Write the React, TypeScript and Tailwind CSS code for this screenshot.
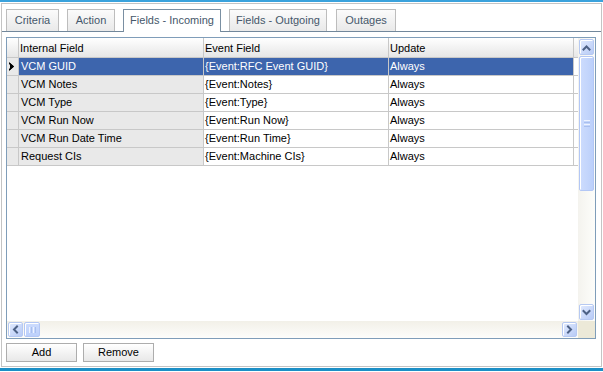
import React from "react";

const rows = [
  { a: "VCM GUID", b: "{Event:RFC Event GUID}", c: "Always" },
  { a: "VCM Notes", b: "{Event:Notes}", c: "Always" },
  { a: "VCM Type", b: "{Event:Type}", c: "Always" },
  { a: "VCM Run Now", b: "{Event:Run Now}", c: "Always" },
  { a: "VCM Run Date Time", b: "{Event:Run Time}", c: "Always" },
  { a: "Request CIs", b: "{Event:Machine CIs}", c: "Always" },
];

function Arrow({ dir }: { dir: "up" | "down" | "left" | "right" }) {
  const paths: Record<string, string> = {
    up: "M1.5 6.5 L4.5 3.5 L7.5 6.5",
    down: "M1.5 3 L4.5 6 L7.5 3",
    left: "M6 1.5 L3 4.5 L6 7.5",
    right: "M3 1.5 L6 4.5 L3 7.5",
  };
  return (
    <svg width="9" height="9" viewBox="0 0 9 9">
      <path d={paths[dir]} fill="none" stroke="#4d6185" strokeWidth="2" strokeLinecap="square" />
    </svg>
  );
}

function SBtn({ dir, cls }: { dir: "up" | "down" | "left" | "right"; cls: string }) {
  return (
    <div
      className={`${cls} flex items-center justify-center rounded-[2px] border border-[#b6c9f2] bg-gradient-to-br from-[#e1eafe] to-[#b8cbf6] shadow-[inset_1px_1px_0_#ffffff]`}
    >
      <Arrow dir={dir} />
    </div>
  );
}

export default function App() {
  return (
    <div
      className="w-[603px] h-[372px] bg-white overflow-hidden flex flex-col text-[11px] leading-none text-black"
      style={{ fontFamily: '"Liberation Sans", Arial, sans-serif' }}
    >
      <div className="h-[2px] bg-[#3aa2dc]" />
      <div className="h-px" />
      <div className="mx-px w-[601px] h-[364px] border border-[#c4c4c4] flex flex-col">
        {/* tabs */}
        <div className="pt-[5px] pl-[4px] flex items-end gap-2 border-b border-[#71879b] h-[28px]">
          <div className="w-[53px] h-[22px] border border-b-0 border-[#bdbdbd] bg-gradient-to-b from-[#fbfbfb] to-[#e9e9e9] flex items-center justify-center text-[#45576a]">
            Criteria
          </div>
          <div className="w-[48px] h-[22px] border border-b-0 border-[#bdbdbd] bg-gradient-to-b from-[#fbfbfb] to-[#e9e9e9] flex items-center justify-center text-[#45576a]">
            Action
          </div>
          <div className="w-[98px] h-[23px] -mb-px border border-b-0 border-[#7a8fa2] bg-white flex items-center justify-center pb-px text-[#45576a]">
            Fields - Incoming
          </div>
          <div className="w-[98px] h-[22px] border border-b-0 border-[#bdbdbd] bg-gradient-to-b from-[#fbfbfb] to-[#e9e9e9] flex items-center justify-center text-[#45576a]">
            Fields - Outgoing
          </div>
          <div className="ml-px w-[60px] h-[22px] border border-b-0 border-[#bdbdbd] bg-gradient-to-b from-[#fbfbfb] to-[#e9e9e9] flex items-center justify-center text-[#45576a]">
            Outages
          </div>
        </div>

        {/* grid */}
        <div className="mt-[5px] ml-[4px] w-[590px] h-[302px] border border-[#7f9db9] flex flex-col">
          <div className="flex h-[283px]">
            <div className="w-[571px] flex flex-col">
              {/* header */}
              <div className="flex h-[20px] border-b border-[#c8c8c8] bg-gradient-to-b from-[#ffffff] to-[#e6e6e6]">
                <div className="w-[12px] border-r border-[#c8c8c8]" />
                <div className="w-[185px] border-r border-[#c8c8c8] pl-[1px] flex items-center pt-[2px]">Internal Field</div>
                <div className="w-[185px] border-r border-[#c8c8c8] pl-[1px] flex items-center pt-[2px]">Event Field</div>
                <div className="w-[185px] border-r border-[#c8c8c8] pl-[1px] flex items-center pt-[2px]">Update</div>
              </div>
              {rows.map((r, i) => {
                const sel = i === 0;
                return (
                  <div key={r.a} className="flex h-[18px] border-b border-[#c8c8c8]">
                    <div className="w-[12px] border-r border-[#c8c8c8] bg-[#e9e9e9] flex items-center pl-[2px]">
                      {sel && (
                        <svg width="6" height="9" viewBox="0 0 6 9">
                          <path d="M0 0 L5 4.5 L0 9 L0 7 L2.5 4.5 L0 2 Z" fill="#000" />
                          <path d="M1 1 L5 4.5 L1 8 Z" fill="#000" />
                        </svg>
                      )}
                    </div>
                    <div
                      className={`w-[185px] border-r border-[#c8c8c8] pl-[2px] flex items-center ${
                        sel ? "bg-[#3d65ad] text-white" : "bg-[#e9e9e9]"
                      }`}
                    >
                      {r.a}
                    </div>
                    <div
                      className={`w-[185px] border-r border-[#c8c8c8] pl-[1px] flex items-center ${
                        sel ? "bg-[#3d65ad] text-white" : "bg-white"
                      }`}
                    >
                      {r.b}
                    </div>
                    <div
                      className={`w-[185px] border-r border-[#c8c8c8] pl-[1px] flex items-center ${
                        sel ? "bg-[#3d65ad] text-white" : "bg-white"
                      }`}
                    >
                      {r.c}
                    </div>
                  </div>
                );
              })}
            </div>
            {/* vertical scrollbar */}
            <div className="w-[17px] h-[283px] p-px flex flex-col bg-gradient-to-r from-[#f4f3ee] to-[#fdfdfa]">
              <SBtn dir="up" cls="w-[15px] h-[16px]" />
              <div className="mt-px w-[15px] h-[135px] rounded-[2px] border border-[#b3c7f5] bg-gradient-to-r from-[#cddcfd] to-[#bcd0fb] shadow-[inset_1px_1px_0_#ffffff] flex flex-col items-center justify-center gap-px">
                <div className="w-[6px] h-px bg-[#eef3fe]" />
                <div className="w-[6px] h-px bg-[#a9bfee]" />
                <div className="w-[6px] h-px bg-[#eef3fe]" />
                <div className="w-[6px] h-px bg-[#a9bfee]" />
              </div>
              <div className="flex-1" />
              <SBtn dir="down" cls="w-[15px] h-[16px]" />
            </div>
          </div>
          <div className="flex h-[17px]">
            <div className="w-[571px] h-[17px] p-px flex bg-gradient-to-b from-[#f2f0e8] to-[#fdfdfb]">
              <SBtn dir="left" cls="w-[15px] h-[15px]" />
              <div className="ml-px w-[16px] h-[15px] rounded-[2px] border border-[#b3c7f5] bg-gradient-to-b from-[#cddcfd] to-[#bcd0fb] shadow-[inset_1px_1px_0_#ffffff] flex items-center justify-center gap-px">
                <div className="w-px h-[6px] bg-[#eef3fe]" />
                <div className="w-px h-[6px] bg-[#a9bfee]" />
                <div className="w-px h-[6px] bg-[#eef3fe]" />
                <div className="w-px h-[6px] bg-[#a9bfee]" />
              </div>
              <div className="flex-1" />
              <SBtn dir="right" cls="w-[15px] h-[15px]" />
            </div>
            <div className="w-[17px] h-[17px] bg-[#ece9d8]" />
          </div>
        </div>

        {/* buttons */}
        <div className="mt-[4px] ml-[4px] flex gap-[6px]">
          <div className="w-[71px] h-[19px] border border-[#adadad] bg-gradient-to-b from-[#ffffff] to-[#e8e8e8] flex items-center justify-center">
            Add
          </div>
          <div className="w-[71px] h-[19px] border border-[#adadad] bg-gradient-to-b from-[#ffffff] to-[#e8e8e8] flex items-center justify-center">
            Remove
          </div>
        </div>
      </div>
      <div className="h-px" />
      <div className="h-[3px] bg-[#1c8fc6]" />
    </div>
  );
}
